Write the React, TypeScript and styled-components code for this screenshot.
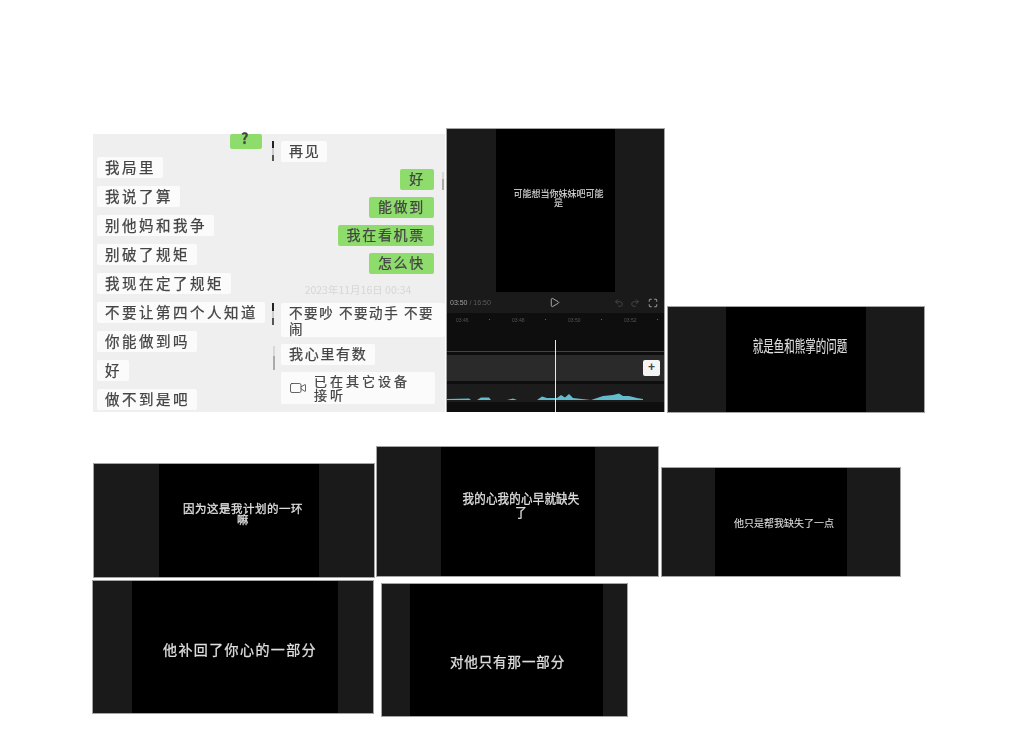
import React from 'react';
import styled, { createGlobalStyle } from 'styled-components';
import { Undo2, Redo2, Maximize, Play, Video } from 'lucide-react';

const GlobalStyle = createGlobalStyle`
    html, body {
        margin: 0;
        padding: 0;
        background: #fff;
    }
    body {
        font-family: "Noto Sans CJK SC", "Noto Sans", sans-serif;
    }
`;

interface Rect {
    $x: number;
    $y: number;
    $w: number;
    $h: number;
}

const Page = styled.div`
    position: relative;
    width: 1024px;
    height: 738px;
    overflow: hidden;
    background: #fff;
`;

// the pictures are pasted freely on the page, so their place is the content
const Pasted = styled.div<Rect>`
    position: absolute;
    left: ${(p) => p.$x}px;
    top: ${(p) => p.$y}px;
    width: ${(p) => p.$w}px;
    height: ${(p) => p.$h}px;
    box-sizing: border-box;
`;

const ChatPicture = styled(Pasted)`
    display: flex;
    background: #efefef;
    filter: blur(0.5px);
`;

const ChatColumn = styled.div<{ $w: number; $pt: number; $pl: number; $gap: number }>`
    position: relative;
    width: ${(p) => p.$w}px;
    padding-top: ${(p) => p.$pt}px;
    padding-left: ${(p) => p.$pl}px;
    box-sizing: border-box;
    display: flex;
    flex-direction: column;
    align-items: flex-start;
    gap: ${(p) => p.$gap}px;
`;

const Bubble = styled.div<{ $green?: boolean; $right?: number; $tight?: boolean }>`
    box-sizing: border-box;
    height: 21px;
    padding: 0 ${(p) => (p.$green ? 9 : 7)}px 0 ${(p) => (p.$green ? 9 : 8)}px;
    background: ${(p) => (p.$green ? '#8edc6c' : '#fbfbfb')};
    border-radius: 2px;
    color: #444;
    font-size: ${(p) => (p.$tight ? 14 : 14.5)}px;
    letter-spacing: ${(p) => (p.$tight ? 1.7 : 2.5)}px;
    -webkit-text-stroke: 0.25px #444;
    line-height: 19px;
    white-space: nowrap;
    ${(p) => (p.$right !== undefined ? `align-self: flex-end; margin-right: ${p.$right}px;` : '')}
`;

const TopBubble = styled(Bubble)`
    width: 32px;
    height: 15px;
    margin: 0 10px 0 0;
    line-height: 8px;
    text-align: center;
    font-weight: 700;
`;

const WideBubble = styled(Bubble)`
    width: 164px;
    height: 34px;
    padding: 1px 0 0 8px;
    margin-top: 22px;
    white-space: normal;
    font-size: 13.5px;
    letter-spacing: 1.6px;
    line-height: 16px;
`;

const CallBubble = styled(Bubble)`
    display: flex;
    align-items: center;
    gap: 7px;
    width: 154px;
    height: 32px;
    padding: 0 0 0 8px;
    font-size: 13px;
    line-height: 14px;
    letter-spacing: 3px;
    white-space: pre;
    svg {
        flex: none;
    }
`;

const Stamp = styled.div`
    position: absolute;
    left: 0;
    right: 1px;
    top: 149px;
    text-align: center;
    color: #d6d6d6;
    font-size: 10.5px;
    line-height: 14px;
`;

const Tick = styled.span<{ $x: number; $y: number; $h: number; $dark?: boolean }>`
    position: absolute;
    left: ${(p) => p.$x}px;
    top: ${(p) => p.$y}px;
    width: 2px;
    height: ${(p) => p.$h}px;
    background: ${(p) =>
        p.$dark ? 'linear-gradient(#222 0 35%, #ccc 35% 70%, #555 70%)' : 'linear-gradient(#d8d8d8 0 40%, #aaa 40%)'};
`;

const Frame = styled(Pasted)<{ $sides: string }>`
    display: grid;
    grid-template-columns: ${(p) => p.$sides};
    background: #1a1a1a;
    border: 1px solid #a4a4a4;
`;

const Side = styled.div`
    background: #1a1a1a;
`;

const Centre = styled.div<{ $pt: number }>`
    background: #000;
    padding-top: ${(p) => p.$pt}px;
    display: flex;
    flex-direction: column;
    align-items: center;
`;

const Caption = styled.div<{
    $size: number;
    $gap: number;
    $line: number;
    $tall?: number;
    $shift?: number;
}>`
    color: #dedede;
    font-size: ${(p) => p.$size}px;
    letter-spacing: ${(p) => p.$gap}px;
    line-height: ${(p) => p.$line}px;
    -webkit-text-stroke: ${(p) => (p.$size > 11 ? 0.3 : 0.1)}px #dedede;
    text-align: center;
    white-space: pre;
    filter: blur(0.35px);
    transform: translateX(${(p) => p.$shift ?? 0}px) scaleY(${(p) => p.$tall ?? 1});
`;

const Editor = styled(Pasted)`
    display: flex;
    flex-direction: column;
    background: #1a1a1a;
    border: 1px solid #a4a4a4;
    border-bottom: none;
`;

const Preview = styled.div`
    height: 163px;
    display: grid;
    grid-template-columns: 49px 119px 1fr;
`;

const Controls = styled.div`
    height: 21px;
    display: grid;
    grid-template-columns: 1fr auto 1fr;
    align-items: center;
    padding: 0 6px 0 3px;
    background: #1a1a1a;
`;

const Time = styled.div`
    font-family: "Liberation Sans", sans-serif;
    font-size: 7px;
    color: #5c5c5c;
    filter: blur(0.4px);
    b {
        font-weight: 400;
        color: #a0a0a0;
    }
`;

const PlayIcon = styled(Play)`
    display: block;
    color: #d8d8d8;
`;

const Tools = styled.div`
    display: flex;
    justify-content: flex-end;
    align-items: center;
    gap: 6px;
    color: #4a4a4a;
    svg:last-child {
        color: #bcbcbc;
        margin-left: 2px;
    }
`;

const Timeline = styled.div`
    position: relative;
    flex: 1;
    display: flex;
    flex-direction: column;
    background: #0e0e0e;
`;

const Ruler = styled.div`
    height: 11px;
    padding: 3px 0 0 9px;
    display: grid;
    grid-template-columns: repeat(4, 56px);
    font-family: "Liberation Sans", sans-serif;
    font-size: 5px;
    line-height: 8px;
    color: #555;
    filter: blur(0.3px);
    span {
        position: relative;
    }
    span::after {
        content: '';
        position: absolute;
        left: 33px;
        top: 3px;
        width: 1px;
        height: 1px;
        background: #666;
    }
`;

const Gap = styled.div<{ $h: number }>`
    height: ${(p) => p.$h}px;
`;

const RedLine = styled.div`
    height: 1px;
    background: #7a2c30;
`;

const Track = styled.div`
    height: 26px;
    margin-top: 3px;
    background: #2a2a2a;
`;

const WaveRow = styled.div`
    height: 18px;
    margin-top: 3px;
    background: #1c1c1c;
    svg {
        display: block;
    }
`;

const Playhead = styled.div`
    position: absolute;
    left: 108px;
    top: 27px;
    bottom: 0;
    width: 1px;
    background: #e8e8e8;
`;

const AddButton = styled.div`
    position: absolute;
    right: 4px;
    top: 47px;
    width: 17px;
    height: 16px;
    border-radius: 2px;
    background: #f4f4f4;
    color: #444;
    font-family: "Liberation Sans", sans-serif;
    font-size: 12px;
    font-weight: 700;
    line-height: 15px;
    text-align: center;
`;

const leftChat = ['我局里', '我说了算', '别他妈和我争', '别破了规矩', '我现在定了规矩', '不要让第四个人知道', '你能做到吗', '好', '做不到是吧'];
const greenChat = ['好', '能做到', '我在看机票', '怎么快'];

const captions = [
    { x: 667, y: 306, w: 258, h: 107, sides: '58px 140px 1fr', pt: 31, size: 10.5, gap: 0, line: 16, tall: 1.5, text: '就是鱼和熊掌的问题', shift: 4 },
    { x: 93, y: 463, w: 282, h: 115, sides: '65px 160px 1fr', pt: 39, size: 11.5, gap: 0.5, line: 11, text: '因为这是我计划的一环\n嘛', shift: 4 },
    { x: 376, y: 446, w: 283, h: 131, sides: '64px 154px 1fr', pt: 45, size: 11.5, gap: 0.2, line: 13, tall: 1.1, text: '我的心我的心早就缺失\n了', shift: 3 },
    { x: 661, y: 467, w: 240, h: 110, sides: '53px 132px 1fr', pt: 49, size: 10, gap: 0, line: 12, text: '他只是帮我缺失了一点', shift: 3 },
    { x: 92, y: 580, w: 282, h: 134, sides: '39px 206px 1fr', pt: 60, size: 14, gap: 1.4, line: 16, text: '他补回了你心的一部分', shift: 5 },
    { x: 381, y: 583, w: 247, h: 134, sides: '28px 193px 1fr', pt: 69, size: 13.5, gap: 0.9, line: 16, text: '对他只有那一部分', shift: 1 }
];

const App: React.FC = () => {
    return (
        <Page>
            <GlobalStyle />
            <ChatPicture $x={93} $y={134} $w={352} $h={278}>
                <ChatColumn $w={179} $pt={0} $pl={4} $gap={8}>
                    <TopBubble $green $right={10}>?</TopBubble>
                    {leftChat.map((line) => (
                        <Bubble key={line}>{line}</Bubble>
                    ))}
                </ChatColumn>
                <ChatColumn $w={173} $pt={7} $pl={9} $gap={7}>
                    <Tick $x={0} $y={7} $h={20} $dark />
                    <Tick $x={170} $y={38} $h={18} />
                    <Tick $x={0} $y={169} $h={22} $dark />
                    <Tick $x={1} $y={212} $h={24} />
                    <Bubble $tight>再见</Bubble>
                    {greenChat.map((line) => (
                        <Bubble key={line} $green $tight $right={11}>{line}</Bubble>
                    ))}
                    <Stamp>2023年11月16日 00:34</Stamp>
                    <WideBubble $tight>不要吵 不要动手 不要闹</WideBubble>
                    <Bubble $tight>我心里有数</Bubble>
                    <CallBubble $tight>
                        <Video size={18} strokeWidth={1.1} />
                        <span>{'已在其它设备\n接听'}</span>
                    </CallBubble>
                </ChatColumn>
            </ChatPicture>

            <Editor $x={446} $y={128} $w={219} $h={284}>
                <Preview>
                    <Side />
                    <Centre $pt={60}>
                        <Caption $size={9} $gap={0} $line={9} $shift={3}>{'可能想当你妹妹吧可能\n是'}</Caption>
                    </Centre>
                    <Side />
                </Preview>
                <Controls>
                    <Time><b>03:50</b> / 16:50</Time>
                    <PlayIcon size={11} strokeWidth={1.6} />
                    <Tools>
                        <Undo2 size={10} />
                        <Redo2 size={10} />
                        <Maximize size={10} />
                    </Tools>
                </Controls>
                <Timeline>
                    <Ruler>
                        <span>03:46</span>
                        <span>03:48</span>
                        <span>03:50</span>
                        <span>03:52</span>
                    </Ruler>
                    <Gap $h={24} />
                    <RedLine />
                    <Track />
                    <WaveRow>
                        <svg width="218" height="18" viewBox="0 0 218 18">
                            <path
                                fill="#62bccb"
                                d="M0 15 L22 14.5 L24 16 L30 16 L34 13.5 L42 13.5 L44 16 L60 16 L66 14.5 L70 16 L90 16 L95 12.5 L100 14 L110 14 L114 11 L118 13.5 L122 10 L126 14 L144 16 L156 12 L166 11 L172 9.5 L176 12 L182 12 L190 14 L196 15 L196 16 L0 16 Z"
                            />
                        </svg>
                    </WaveRow>
                    <Playhead />
                    <AddButton>+</AddButton>
                </Timeline>
            </Editor>

            {captions.map((c) => (
                <Frame key={c.text} $x={c.x} $y={c.y} $w={c.w} $h={c.h} $sides={c.sides}>
                    <Side />
                    <Centre $pt={c.pt}>
                        <Caption $size={c.size} $gap={c.gap} $line={c.line} $tall={c.tall} $shift={c.shift}>
                            {c.text}
                        </Caption>
                    </Centre>
                    <Side />
                </Frame>
            ))}
        </Page>
    );
};

export default App;
